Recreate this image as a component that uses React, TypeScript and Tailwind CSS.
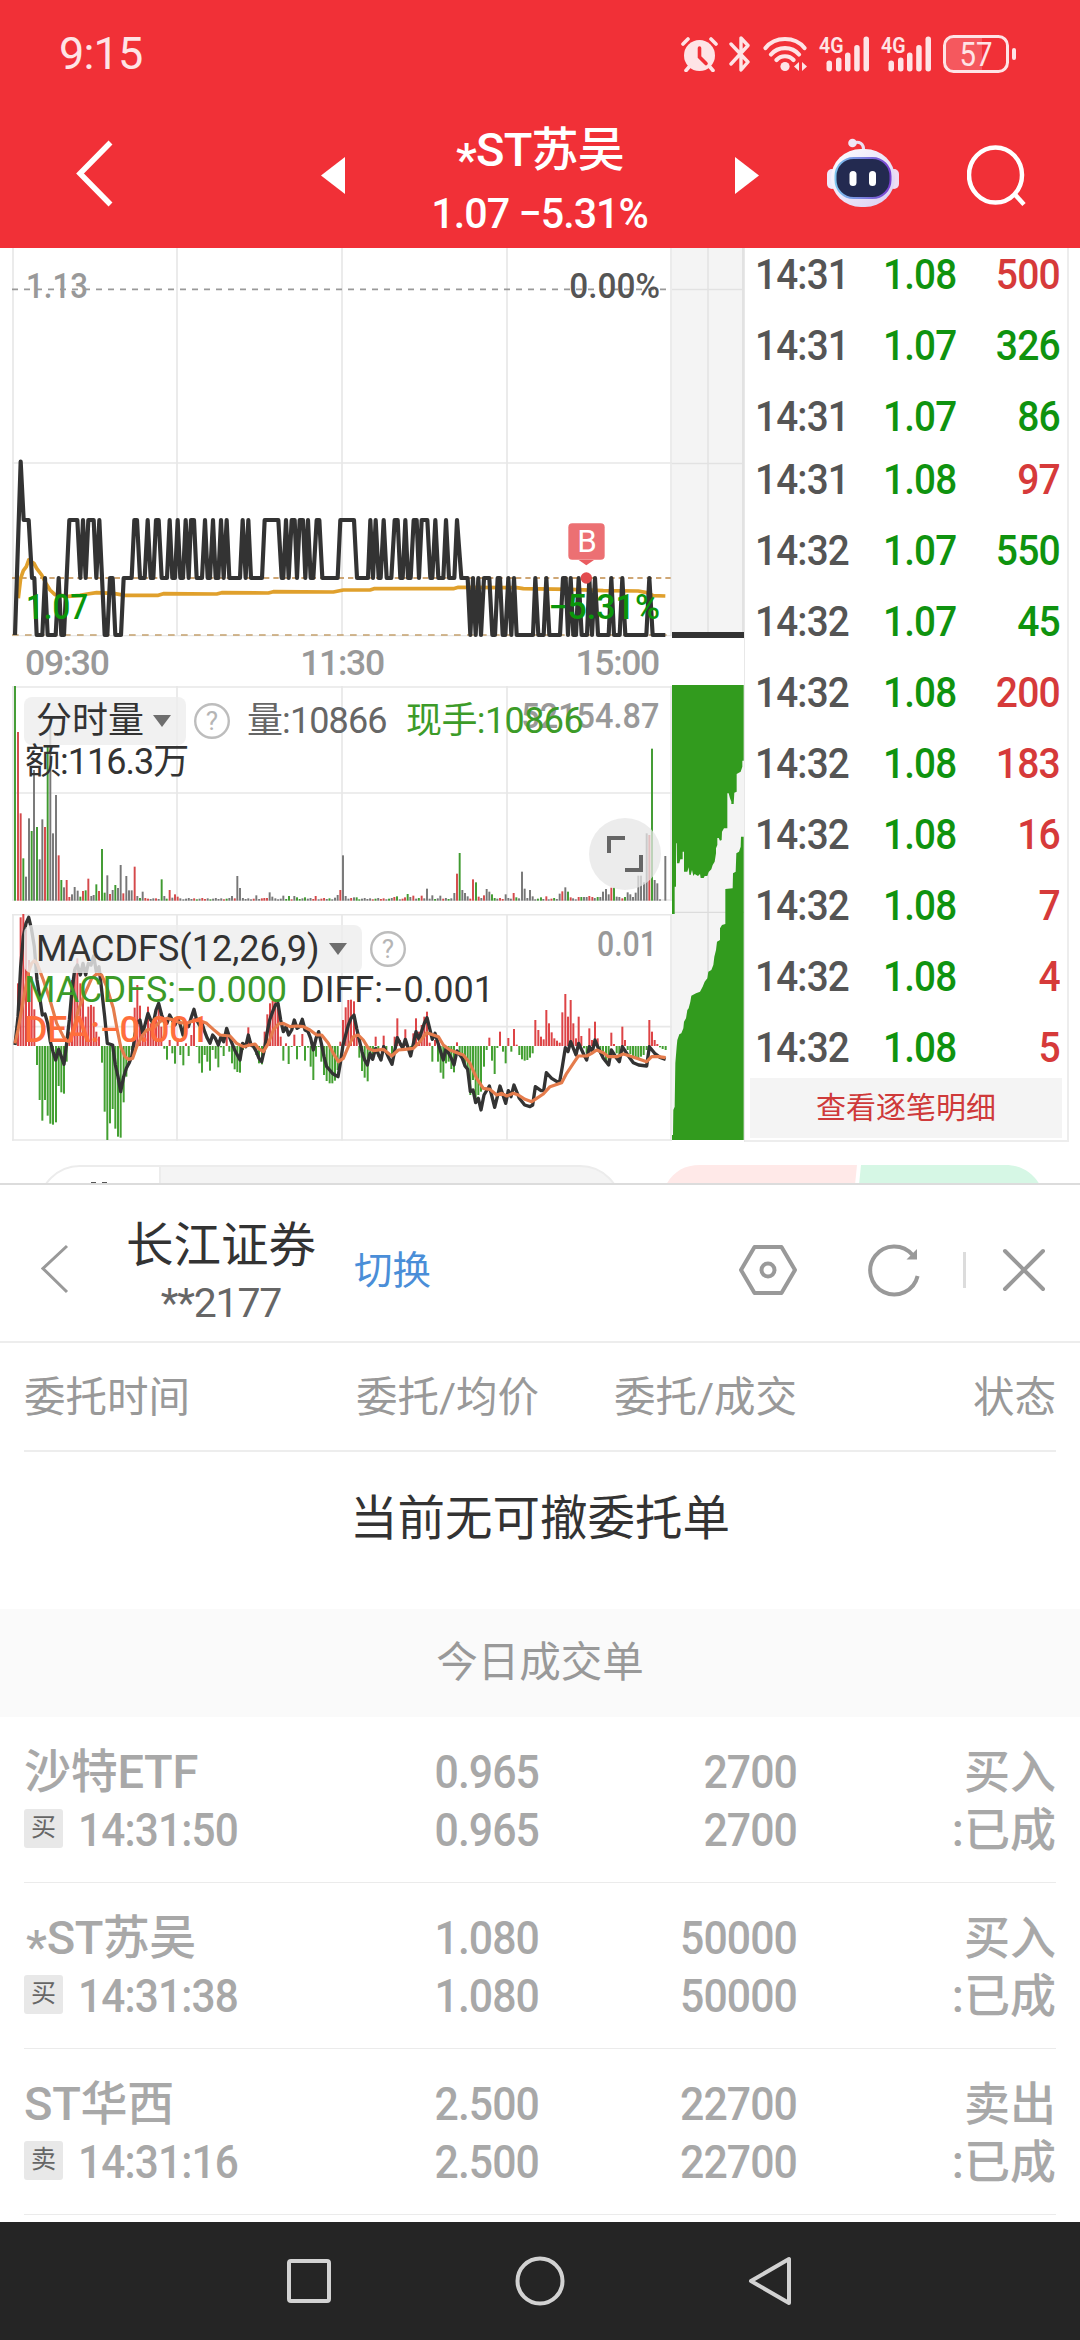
import React from 'react';

type Pt = [number, number];

// chart coordinates are kept at 3 units per css pixel
const TOP = 840;
const MID = 1014;
const LOW = 1185;

const PRICE_RUNS: [number, number, number][] = [
  [45, 45, LOW], [62, 62, 665], [71, 86, TOP], [96, 103, MID], [110, 127, LOW], [135, 135, MID], [143, 167, LOW],
  [176, 176, MID], [184, 192, LOW], [208, 232, TOP], [241, 241, MID], [249, 249, TOP], [257, 257, MID], [265, 281, TOP],
  [289, 289, MID], [298, 298, TOP], [314, 322, LOW], [330, 338, MID], [346, 363, LOW], [371, 395, MID], [403, 411, TOP],
  [420, 434, MID], [443, 443, TOP], [452, 460, MID], [468, 476, TOP], [485, 501, MID], [509, 509, TOP], [517, 525, MID],
  [533, 533, TOP], [541, 549, MID], [557, 557, TOP], [566, 566, MID], [573, 582, TOP], [590, 606, MID], [615, 615, TOP],
  [623, 630, MID], [639, 639, TOP], [647, 655, MID], [663, 663, TOP], [671, 671, MID], [680, 680, TOP], [688, 720, MID],
  [728, 728, TOP], [737, 737, MID], [745, 745, TOP], [753, 786, MID], [794, 835, TOP], [845, 850, MID], [858, 858, TOP],
  [866, 866, MID], [875, 884, TOP], [891, 891, MID], [899, 909, TOP], [916, 916, MID], [924, 924, TOP], [932, 940, MID],
  [950, 958, TOP], [967, 1013, MID], [1021, 1062, TOP], [1071, 1104, MID], [1111, 1111, TOP], [1119, 1119, MID],
  [1127, 1127, TOP], [1136, 1142, MID], [1151, 1151, TOP], [1160, 1174, MID], [1184, 1193, TOP], [1201, 1208, MID],
  [1216, 1216, TOP], [1224, 1232, MID], [1241, 1250, TOP], [1257, 1257, MID], [1265, 1282, TOP], [1291, 1297, MID],
  [1306, 1306, TOP], [1315, 1330, MID], [1338, 1338, TOP], [1347, 1363, MID], [1371, 1371, TOP], [1384, 1403, MID],
  [1411, 1411, LOW], [1419, 1419, MID], [1427, 1427, LOW], [1435, 1435, MID], [1443, 1443, LOW], [1452, 1468, MID],
  [1477, 1485, LOW], [1493, 1500, MID], [1508, 1516, LOW], [1525, 1525, MID], [1534, 1534, LOW], [1542, 1542, MID],
  [1550, 1599, LOW], [1606, 1606, MID], [1615, 1631, LOW], [1639, 1639, MID], [1648, 1680, LOW], [1689, 1697, MID],
  [1704, 1704, LOW], [1712, 1712, MID], [1720, 1728, LOW], [1736, 1736, MID], [1745, 1761, LOW], [1768, 1768, MID],
  [1776, 1776, LOW], [1785, 1785, MID], [1794, 1826, LOW], [1834, 1834, MID], [1842, 1859, LOW], [1867, 1867, MID],
  [1876, 1939, LOW], [1948, 1948, MID], [1958, 1996, LOW],
];

const AVG_LINE =
  '55,1075 62,1015 70,992 79,980 86,960 93,965 102,970 110,985 125,1005 138,1030 150,1050 165,1064 205,1069 240,1066 262,1062 290,1058 340,1060 375,1066 475,1066 490,1061 650,1062 665,1058 805,1059 820,1055 1000,1056 1030,1050 1110,1050 1122,1046 1360,1046 1375,1042 1550,1043 1570,1046 1710,1048 1810,1052 1915,1053 1940,1058 1960,1067 1996,1068';

const VOLUME = `45,48,g 54,186,r 62,430,r 70,565,g 78,620,k 87,445,k 95,483,g 102,300,k 111,471,g 119,568,k 127,448,k 135,471,r
143,225,g 151,150,k 159,490,k 168,375,k 176,556,r 184,630,g 192,652,k 200,630,r 208,681,r 216,673,k 224,651,k 233,662,k
241,680,g 249,663,r 257,661,g 265,626,r 274,678,k 281,675,k 289,643,g 297,663,r 306,537,g 314,668,g 322,616,k 330,672,r
338,660,k 346,645,g 354,654,k 362,585,k 370,670,r 379,618,k 387,661,k 395,661,k 404,590,r 412,678,k 420,684,g 428,665,k
436,684,r 444,686,r 452,687,k 460,685,k 468,685,r 476,687,k 485,628,g 493,678,k 500,686,g 509,660,r 517,683,k 525,673,r
533,680,r 541,685,k 696,678,k 712,618,k 720,654,k 769,676,k 793,684,r 801,684,r 809,667,k 817,680,k 850,677,k 867,678,g
883,678,k 891,682,g 915,682,g 947,678,r 1005,683,k 1013,675,k 1021,660,r 1029,556,k 1037,678,k 1062,682,k 1070,682,g
1183,681,r 1191,679,g 1215,682,r 1223,672,g 1231,681,k 1240,677,r 1265,677,r 1281,656,k 1297,676,k 1321,677,k 1363,669,k
1371,611,r 1379,549,g 1387,660,k 1395,669,k 1403,679,k 1419,628,r 1428,637,g 1436,680,r 1444,684,k 1452,676,r 1460,657,k
1468,665,k 1476,673,g 1484,684,g 1517,673,k 1525,684,k 1541,669,r 1549,682,g 1557,685,k 1566,605,k 1574,656,k 1582,684,k
1590,660,k 1598,679,k 1623,682,g 1639,679,r 1679,671,k 1687,664,r 1696,652,k 1704,665,g 1712,682,r 1736,681,r 1744,681,g
1752,681,k 1760,681,k 1768,678,r 1777,681,r 1793,681,g 1801,681,k 1809,665,k 1818,657,k 1826,673,k 1834,653,r 1842,653,g
1850,680,k 1858,681,k 1867,685,r 1875,681,g 1883,667,k 1891,673,k 1899,681,k 1907,668,k 1915,617,k 1923,617,k 1932,637,k
1940,490,k 1948,495,r 1956,236,g 1964,630,k 1972,640,k 1980,688,k 1996,558,k`
  .split(/\s+/)
  .map((s) => {
    const [x, y, c] = s.split(',');
    return { x: +x, y: +y, c };
  });

// thin trading minutes between the listed bars
const QUIET: { x: number; y: number; c: string }[] = [];
for (let i = 0; i < 176; i++) {
  const x = 550 + i * 8.12;
  if (x < 1975 && !VOLUME.some((v) => Math.abs(v.x - x) < 5)) {
    QUIET.push({ x, y: 688 - ((i * 7) % 5), c: 'kkrgkkgrkrk'[(i * 5) % 11] });
  }
}

const ZERO = 1128;
const MACD = `54,940 62,742 70,732 78,780 87,870 95,920 103,1018 111,1185 119,1290 127,1352 135,1290 143,1337 151,1361 159,1364
168,1357 176,1248 184,1267 192,1271 200,1175 208,1085 216,930 224,890 232,865 241,940 249,970 257,1040 265,1010 273,1005
281,1010 289,1085 297,1100 306,1178 314,1325 322,1410 330,1360 338,1317 346,1376 354,1400 362,1403 371,1297 379,1220
387,1180 395,1140 404,1013 412,945 420,1007 428,1070 436,1080 444,1010 452,1060 460,1090 468,1040 476,1010 484,1070
493,1136 501,1169 509,1110 517,1150 525,1181 533,1105 541,1155 550,1186 558,1120 566,1158 574,1095 582,1045 590,1131 598,1180
606,1208 614,1155 622,1175 630,1202 638,1140 647,1166 655,1192 663,1132 671,1158 680,1100 688,1145 696,1180 704,1198
712,1206 720,1208 729,1140 737,1120 745,1072 753,1115 761,1135 769,1155 777,1180 786,1183 794,1085 802,1033 810,1000
818,992 826,995 834,998 842,1100 850,1172 858,1120 866,1182 875,1131 883,1094 891,1168 899,1131 907,1092 915,1172 924,1133 932,1190
940,1230 948,1160 956,1131 964,1175 972,1215 980,1233 989,1240 997,1240 1005,1232 1013,1200 1021,1115 1029,1050 1037,1012
1045,990 1053,989 1062,994 1070,1090 1078,1163 1086,1203 1094,1223 1103,1234 1111,1160 1119,1165 1127,1100 1135,1160
1151,1097 1159,1140 1176,1160 1184,1100 1192,1045 1200,1110 1208,1122 1216,1078 1224,1135 1232,1150
1240,1090 1248,1045 1257,1085 1265,1065 1273,1040 1281,1025 1289,1118 1297,1175 1305,1110 1314,1175 1322,1208 1330,1226
1338,1180 1346,1175 1354,1197 1362,1207 1371,1117 1379,1150 1387,1170 1395,1190 1403,1205 1411,1275 1419,1230 1427,1295
1435,1275 1443,1265 1452,1190 1460,1140 1468,1103 1476,1172 1484,1212 1492,1134 1500,1085 1509,1145 1517,1180 1525,1104
1534,1145 1542,1077 1550,1124 1558,1155 1566,1168 1574,1172 1582,1170 1590,1163 1598,1150 1606,1050 1615,1080 1623,1100
1631,1108 1639,1020 1647,1060 1655,1087 1663,1105 1671,1112 1679,1118 1687,1027 1696,972 1704,1040 1712,990 1720,1060
1728,1105 1736,1040 1744,1098 1752,1135 1760,1150 1768,1075 1776,1110 1785,1055 1793,1105 1801,1150 1809,1160 1818,1175
1826,1180 1834,1088 1842,1122 1850,1150 1858,1165 1867,1070 1875,1110 1883,1140 1891,1152 1899,1160 1907,1165 1915,1165
1923,1160 1931,1155 1940,1140 1948,1050 1956,1085 1964,1110 1972,1122 1980,1132 1988,1137 1997,1140`
  .split(/\s+/)
  .map((s) => s.split(',').map(Number) as Pt);

const DIFF_LINE =
  '45,1125 54,1040 62,890 70,800 78,760 86,742 94,775 103,830 111,930 119,980 127,1035 135,1032 143,1060 151,1115 159,1145 167,1170 176,1138 184,1160 192,1183 200,1120 208,1050 216,960 224,900 232,885 241,915 249,880 257,915 265,880 273,885 281,858 289,905 297,890 305,960 314,1040 322,1120 338,1125 346,1185 354,1220 362,1265 371,1220 379,1195 387,1180 395,1160 403,1110 411,1060 420,1050 428,1090 436,1060 444,1030 452,1050 460,1060 468,1020 476,1000 485,1035 493,1055 501,1060 509,1035 517,1050 525,1065 533,1045 541,1065 549,1095 557,1060 565,1070 573,1045 582,1018 590,1050 598,1065 606,1060 614,1085 622,1105 630,1120 638,1095 646,1105 655,1125 663,1100 671,1115 680,1075 688,1100 696,1120 704,1140 712,1155 720,1170 728,1120 737,1130 745,1095 753,1125 761,1130 769,1145 777,1165 785,1175 793,1140 801,1090 809,1050 818,1025 826,1005 834,1000 842,1050 850,1085 858,1070 866,1095 875,1080 883,1050 891,1075 899,1070 907,1048 915,1080 924,1085 932,1105 940,1140 948,1105 956,1085 964,1120 972,1160 980,1190 989,1200 997,1210 1005,1215 1014,1220 1021,1180 1029,1125 1037,1095 1045,1065 1053,1045 1062,1035 1070,1075 1078,1110 1086,1145 1094,1170 1102,1185 1110,1150 1118,1168 1127,1135 1143,1170 1151,1130 1167,1165 1176,1183 1192,1103 1208,1135 1216,1108 1232,1158 1248,1085 1257,1108 1273,1060 1281,1043 1297,1108 1305,1090 1322,1145 1330,1170 1338,1135 1354,1165 1362,1185 1371,1143 1387,1165 1395,1188 1403,1198 1411,1265 1419,1260 1427,1298 1435,1285 1443,1320 1452,1275 1468,1248 1484,1312 1500,1248 1517,1300 1525,1262 1533,1280 1542,1245 1558,1285 1574,1305 1590,1310 1598,1305 1606,1250 1623,1262 1631,1262 1639,1208 1655,1225 1671,1235 1679,1235 1687,1190 1696,1133 1704,1145 1712,1115 1728,1155 1736,1120 1752,1155 1760,1170 1768,1130 1777,1145 1785,1110 1793,1130 1810,1165 1826,1185 1834,1140 1850,1165 1858,1175 1867,1130 1883,1155 1900,1178 1916,1185 1940,1188 1948,1130 1964,1150 1980,1162 1997,1168';

const DEA_LINE =
  '45,1120 54,1080 70,990 86,905 95,880 103,872 111,880 130,930 150,990 170,1060 190,1100 200,1112 208,1115 220,1080 235,1020 255,970 275,925 290,912 305,915 320,950 340,1015 350,1070 362,1130 375,1160 385,1168 398,1165 410,1130 425,1100 440,1080 460,1075 480,1055 500,1045 520,1050 540,1058 560,1060 580,1052 600,1052 620,1060 640,1078 660,1095 690,1098 710,1120 730,1130 750,1125 765,1122 775,1135 790,1145 805,1120 820,1080 835,1062 850,1060 870,1070 890,1068 910,1070 930,1080 950,1095 965,1095 985,1120 1000,1150 1015,1175 1030,1165 1045,1130 1060,1100 1075,1095 1090,1110 1105,1135 1120,1142 1150,1138 1175,1158 1195,1140 1215,1138 1240,1135 1260,1115 1280,1088 1300,1095 1315,1100 1330,1125 1350,1140 1375,1150 1390,1155 1410,1180 1430,1225 1450,1255 1470,1258 1490,1275 1505,1270 1520,1278 1540,1270 1555,1275 1575,1288 1595,1295 1610,1285 1630,1272 1650,1250 1685,1238 1700,1210 1720,1180 1735,1158 1760,1158 1775,1150 1790,1140 1810,1148 1825,1160 1850,1160 1870,1152 1890,1158 1910,1165 1940,1175 1955,1160 1975,1160 1997,1163';

const ASK_AREA =
  '0,45 215,45 215,272 211,272 211,290 206,305 194,312 194,365 187,368 185,402 178,402 178,395 174,385 170,370 166,370 166,475 156,475 150,485 149,510 144,512 140,504 136,504 136,525 132,535 132,550 128,575 122,585 118,598 110,606 106,618 98,618 95,624 86,624 84,612 78,618 68,612 64,618 60,600 56,615 52,614 50,592 46,605 36,605 36,545 32,545 32,568 25,568 22,580 15,580 14,520 12,520 12,650 8,650 8,732 0,732';

const BID_AREA =
  '215,500 207,500 206,530 201,545 193,550 191,605 183,610 182,655 160,657 160,762 150,765 144,775 144,810 135,815 132,840 127,860 124,885 118,900 109,905 106,925 98,935 92,950 84,965 72,970 58,977 55,995 50,1015 46,1020 42,1045 36,1055 34,1075 28,1090 22,1093 16,1110 14,1130 10,1180 8,1310 4,1320 3,1395 0,1395 0,1410 215,1410';

const BAR_FILL: Record<string, string> = { r: '#d5494b', g: '#3f9a30', k: '#777777' };

const TRADES: [string, string, string, boolean][] = [
  ['14:31', '1.08', '500', true],
  ['14:31', '1.07', '326', false],
  ['14:31', '1.07', '86', false],
  ['14:31', '1.08', '97', true],
  ['14:32', '1.07', '550', false],
  ['14:32', '1.07', '45', false],
  ['14:32', '1.08', '200', true],
  ['14:32', '1.08', '183', true],
  ['14:32', '1.08', '16', true],
  ['14:32', '1.08', '7', true],
  ['14:32', '1.08', '4', true],
  ['14:32', '1.08', '5', true],
];

const ORDERS = [
  { name: '沙特ETF', side: '买', time: '14:31:50', price: '0.965', qty: '2700', action: '买入' },
  { name: '*ST苏吴', side: '买', time: '14:31:38', price: '1.080', qty: '50000', action: '买入' },
  { name: 'ST华西', side: '卖', time: '14:31:16', price: '2.500', qty: '22700', action: '卖出' },
];

function Signal() {
  return (
    <svg width="51" height="44" viewBox="0 -4 51 44" className="overflow-visible" fill="#fee4e6">
      <text x="0" y="17" fontSize="21.5" fontWeight="600" textLength="24.500" lengthAdjust="spacingAndGlyphs">4G</text>
      <rect x="7.5" y="24.5" width="5.5" height="11" rx="2.7" />
      <rect x="17" y="21.5" width="5.5" height="14" rx="2.7" />
      <rect x="26" y="16.5" width="5.5" height="19" rx="2.7" />
      <rect x="35.2" y="9" width="5.5" height="26.5" rx="2.7" />
      <rect x="44.5" y="0.5" width="5.5" height="35" rx="2.7" />
    </svg>
  );
}

function StatusBar() {
  return (
    <div className="flex h-[108px] items-center pl-[59px] pr-[63px] text-[#fee4e6]">
      <span className="text-[45px] leading-[50px] tracking-[-0.8px]">9:15</span>
      <div className="ml-auto flex items-center">
        <svg width="37" height="36" viewBox="0 0 37 36" fill="none" stroke="#fee4e6" strokeWidth="3.6" strokeLinecap="round">
          <circle cx="18.5" cy="19.5" r="15.5" fill="#fee4e6" stroke="none" />
          <path d="M2 8 7 3M35 8 30 3M8 31 5 34.5M29 31 32 34.5" />
          <path d="M18.5 12v9l6.5 6.5" stroke="#f13037" />
        </svg>
        <svg className="ml-[10px]" width="24" height="36" viewBox="0 0 24 36" fill="none" stroke="#fee4e6" strokeWidth="3.4" strokeLinecap="round" strokeLinejoin="round">
          <path d="M3 8 20 26 13 34V22M3 28 20 9.5 13 2v12" />
        </svg>
        <svg className="ml-[11px]" width="44" height="36" viewBox="0 0 44 36" fill="none" stroke="#fee4e6" strokeWidth="4.2" strokeLinecap="round">
          <path d="M2.5 12C12 0 32 0 41.5 12M8 18.5c7-8.5 21-8.5 28 0M13.5 24c4.5-5 12.5-5 17 0" />
          <circle cx="22" cy="30.5" r="4.6" fill="#fee4e6" stroke="none" />
          <path d="M36 26v9l-5-4.5zM39 26v9l5-4.5z" fill="#fee4e6" stroke="none" />
        </svg>
        <div className="ml-[12px]"><Signal /></div>
        <div className="ml-[11px]"><Signal /></div>
        <svg className="ml-[11px]" width="74" height="38" viewBox="0 0 74 38">
          <path d="M10 3h29v32h-29a7 7 0 0 1-7-7v-18a7 7 0 0 1 7-7z" fill="#f5585e" />
          <rect x="1.5" y="1.5" width="63" height="35" rx="9" fill="none" stroke="#fee4e6" strokeWidth="3" />
          <rect x="69" y="13" width="4" height="12" rx="2" fill="#fee4e6" />
          <text x="33" y="30.5" fontSize="33" textAnchor="middle" textLength="33" lengthAdjust="spacingAndGlyphs" fill="#fee4e6">57</text>
        </svg>
      </div>
    </div>
  );
}

function RobotIcon() {
  return (
    <svg width="74" height="70" viewBox="0 0 74 70">
      <defs>
        <linearGradient id="shell" x1="0" y1="0" x2="1" y2="1">
          <stop offset="0" stopColor="#ffffff" />
          <stop offset="1" stopColor="#d9cdf2" />
        </linearGradient>
        <linearGradient id="rim" x1="0" y1="0" x2="1" y2="0">
          <stop offset="0" stopColor="#7cc3ee" />
          <stop offset="1" stopColor="#7a3fd0" />
        </linearGradient>
      </defs>
      <path d="M27 5c6-2 11 0 10.5 8" fill="none" stroke="#eadff2" strokeWidth="3.2" />
      <circle cx="26.5" cy="5" r="4.3" fill="#efe6f6" />
      <rect x="1" y="31" width="10" height="20" rx="5" fill="#efe9fb" />
      <rect x="63" y="31" width="10" height="20" rx="5" fill="#efdcf3" />
      <rect x="5" y="11" width="64" height="58" rx="30" fill="url(#shell)" />
      <rect x="9.5" y="20" width="55" height="40" rx="18" fill="#232a50" stroke="url(#rim)" strokeWidth="2" />
      <rect x="23.5" y="33" width="7" height="15" rx="3.5" fill="#fff" />
      <rect x="43" y="33" width="7" height="15" rx="3.5" fill="#fff" />
    </svg>
  );
}

function TitleBar() {
  return (
    <div className="flex h-[140px] items-start text-white">
      <svg className="ml-[76px] mt-[32px]" width="38" height="68" viewBox="0 0 38 68" fill="none" stroke="#fff" strokeWidth="5.5">
        <path d="M34.5 2.5 4 33.5 34.5 64.5" />
      </svg>
      <svg className="ml-[207px] mt-[49px]" width="24" height="37" viewBox="0 0 24 37" fill="#fff"><path d="M24 0v37L0 18.5z" /></svg>
      <div className="flex w-[390px] flex-col items-center pt-[16px]">
        <div className="flex text-[47px] font-medium leading-[52px] tracking-[-0.8px]">
          <span className="pt-[10px]">*</span>
          <span>ST苏吴</span>
        </div>
        <div className="mt-[4px] scale-x-[.97] text-[42.5px] font-medium leading-[48px] tracking-[-1px]">1.07 −5.31%</div>
      </div>
      <svg className="mt-[49px]" width="24" height="37" viewBox="0 0 24 37" fill="#fff"><path d="M0 0v37L24 18.5z" /></svg>
      <div className="ml-[67px] mt-[30px]"><RobotIcon /></div>
      <svg className="ml-[67px] mt-[37px]" width="60" height="62" viewBox="0 0 60 62" fill="none" stroke="#fff" strokeWidth="4.5">
        <ellipse cx="28.5" cy="30" rx="26.5" ry="27.5" />
        <path d="M47 48.5 57 59.5" />
      </svg>
    </div>
  );
}

function PricePanel() {
  const line = PRICE_RUNS.map(([a, b, y]) => (a === b ? `${a},${y}` : `${a},${y} ${b},${y}`)).join(' ');
  return (
    <svg width="672" height="392" viewBox="0 24 2016 1176" className="block">
      <g stroke="#e8e8e8" strokeWidth="5" fill="none">
        <path d="M39 24V1188M531 24V1188M1026 24V1188M1521 24V1188M2013 24V1188" />
        <path d="M36 669H2016M36 1187H2016" strokeWidth="4" />
      </g>
      <path d="M36 148H2000" stroke="#999" strokeWidth="5" strokeDasharray="18 18" />
      <path d="M36 1014H2016" stroke="#c08a48" strokeWidth="5" strokeDasharray="16 12" />
      <path d="M36 1185H2000" stroke="#c4a06c" strokeWidth="5" strokeDasharray="20 19" />
      <polyline points={AVG_LINE} fill="none" stroke="#e0a02c" strokeWidth="11" strokeLinejoin="round" />
      <polyline points={line} fill="none" stroke="#333" strokeWidth="12.5" strokeLinejoin="round" />
      <circle cx="1759" cy="1014" r="17" fill="#e24b4f" />
      <path d="M1736 960h46l-23 16z" fill="#ea5c60" />
      <rect x="1705" y="850" width="109" height="109" rx="12" fill="#ec7073" />
      <g fontWeight="500" fontSize="106">
        <text x="1761" y="936" fontSize="94" fontWeight="400" textAnchor="middle" fill="#fff">B</text>
        <text x="78" y="174" textLength="186" lengthAdjust="spacingAndGlyphs" fill="#999">1.13</text>
        <text x="1708" y="174" textLength="272" lengthAdjust="spacingAndGlyphs" fill="#555">0.00%</text>
        <text x="78" y="1136" textLength="186" lengthAdjust="spacingAndGlyphs" fill="#0a960a">1.07</text>
        <text x="1645" y="1136" textLength="335" lengthAdjust="spacingAndGlyphs" fill="#0a960a">−5.31%</text>
      </g>
    </svg>
  );
}

function Help() {
  return (
    <svg width="36" height="36" viewBox="0 0 36 36">
      <circle cx="18" cy="18" r="16.8" fill="none" stroke="#bdbdbd" strokeWidth="2.4" />
      <text x="18" y="27" textAnchor="middle" fontSize="26" fill="#b5b5b5">?</text>
    </svg>
  );
}

function Caret() {
  return (
    <svg width="18" height="12" viewBox="0 0 18 12" fill="#6e6e6e"><path d="M0 0h18L9 12z" /></svg>
  );
}

function VolumePanel() {
  return (
    <div className="relative h-[228px]">
      <svg width="672" height="228" viewBox="0 48 2016 684" className="block">
        <g stroke="#e8e8e8" strokeWidth="5" fill="none">
          <path d="M39 48V692M531 48V692M1026 48V692M1521 48V692M2013 48V692" />
          <path d="M36 51H2016M36 369H2016M36 690H2016" />
        </g>
        {[...VOLUME, ...QUIET].map((b, i) => (
          <rect key={i} x={b.x - 2.9} y={b.y} width="5.8" height={692 - b.y} fill={BAR_FILL[b.c]} />
        ))}
        <text x="1564" y="174" fontSize="106" fontWeight="500" textLength="414" lengthAdjust="spacingAndGlyphs" fill="#999">52154.87</text>
      </svg>
      <div className="absolute left-[24px] top-[11px] flex h-[48px] items-center text-[36px] leading-[48px]">
        <div className="flex h-[48px] w-[162px] items-center rounded-lg bg-[#eeeeee]/80 pl-[12px] text-[#333]">
          <span>分时量</span>
          <span className="ml-[9px]"><Caret /></span>
        </div>
        <span className="ml-[8px]"><Help /></span>
        <span className="ml-[17px] w-[142px] whitespace-nowrap tracking-[-0.9px] text-[#666]">量:10866</span>
        <span className="ml-[17px] whitespace-nowrap tracking-[-0.6px] text-[#3c9b28]">现手:10866</span>
      </div>
      <div className="absolute left-[25px] top-[52px] text-[36px] leading-[48px] tracking-[-1px] text-[#333]">额:116.3万</div>
      <div className="absolute left-[589px] top-[132px] flex size-[72px] items-center justify-center rounded-full bg-[#e6e6e6]/75">
        <svg width="38" height="38" viewBox="0 0 38 38" fill="none" stroke="#666" strokeWidth="4">
          <path d="M3 18V3h16M35 20v15h-16" />
        </svg>
      </div>
    </div>
  );
}

function MacdPanel() {
  return (
    <div className="relative h-[228px]">
      <svg width="672" height="228" viewBox="0 732 2016 684" className="block">
        <g stroke="#e8e8e8" strokeWidth="5" fill="none">
          <path d="M39 732V1412M531 732V1412M1026 732V1412M1521 732V1412M2013 732V1412" />
          <path d="M36 734H2016M36 1070H2016M36 1410H2016" />
        </g>
        {MACD.map(([x, y], i) => (
          <rect
            key={i}
            x={x - 3}
            y={Math.min(y, ZERO)}
            width="6"
            height={Math.abs(y - ZERO)}
            fill={y < ZERO ? '#dd4446' : '#43a032'}
          />
        ))}
        <polyline points={DIFF_LINE} fill="none" stroke="#333" strokeWidth="10" strokeLinejoin="round" />
        <polyline points={DEA_LINE} fill="none" stroke="#e57c4c" strokeWidth="9.5" strokeLinejoin="round" />
        <text x="1791" y="857" fontSize="106" fontWeight="500" textLength="180" lengthAdjust="spacingAndGlyphs" fill="#999">0.01</text>
      </svg>
      <div className="absolute left-[24px] top-[11px] flex h-[48px] items-center">
        <div className="flex h-[48px] w-[338px] items-center rounded-lg bg-[#eeeeee]/80 pl-[12px] text-[#333]">
          <span className="w-[283px] whitespace-nowrap text-[36px] leading-[48px]">MACDFS(12,26,9)</span>
          <span className="ml-[10px]"><Caret /></span>
        </div>
        <span className="ml-[8px]"><Help /></span>
      </div>
      <div className="absolute left-[24px] top-[52px] flex whitespace-nowrap text-[36px] leading-[48px]">
        <span className="w-[277px] text-[#3c9b28]">MACDFS:−0.000</span>
        <span className="text-[#333]">DIFF:−0.001</span>
      </div>
      <div className="absolute left-[24px] top-[92px] whitespace-nowrap text-[36px] font-medium leading-[48px] tracking-[-0.4px] text-[#ff6e3c]">DEA:−0.001</div>
    </div>
  );
}

function DepthColumn() {
  return (
    <div className="w-[73px] border-r border-[#e8e8e8]">
      <div className="flex h-[384px] bg-[#f4f4f4]">
        <svg width="72" height="384" viewBox="0 0 72 384" stroke="#e2e2e2" strokeWidth="1.5">
          <path d="M36 0V384M0 41.5H72M0 215.5H72" />
          <path d="M71 0V384" strokeWidth="2" />
        </svg>
      </div>
      <div className="h-[6px] bg-[#333]" />
      <div className="h-[47px]" />
      <svg width="72" height="455" viewBox="0 45 216 1365" preserveAspectRatio="none" className="block bg-[#f4f4f4]">
        <path d="M108 48V1410M0 727H216" stroke="#dcdcdc" strokeWidth="4" />
        <polygon points={ASK_AREA} fill="#329b1e" />
        <polygon points={BID_AREA} fill="#329b1e" />
      </svg>
    </div>
  );
}

function TradeRow({ trade }: { trade: [string, string, string, boolean] }) {
  const [time, price, qty, up] = trade;
  return (
    <div className="flex h-[71px] items-center pl-[10px] pr-[7px] text-[42px] font-medium leading-[48px] tracking-[-0.9px]">
      <span className="w-[128px] origin-left scale-x-[.92] text-[#555]">{time}</span>
      <span className="origin-left scale-x-[.92] text-[#0f930f]">{price}</span>
      <span className={up ? 'ml-auto origin-right scale-x-[.93] text-[#d63a3a]' : 'ml-auto origin-right scale-x-[.93] text-[#0f930f]'}>{qty}</span>
    </div>
  );
}

function TradeList() {
  return (
    <div className="flex w-[324px] flex-col overflow-hidden border-b-2 border-r-2 border-[#ededed]">
      <div className="-mt-[9px]">
        {TRADES.slice(0, 3).map((t, i) => <TradeRow key={i} trade={t} />)}
      </div>
      <div className="-mt-[8px]">
        {TRADES.slice(3).map((t, i) => <TradeRow key={i} trade={t} />)}
      </div>
      <button className="-mt-[5px] ml-[5px] h-[60px] w-[312px] bg-[#f4f4f4] text-[30px] leading-[60px] text-[#cf3a3a]">查看逐笔明细</button>
    </div>
  );
}

function ShortcutStrip() {
  return (
    <div className="flex h-[41px] items-start overflow-hidden pt-[23px]">
      <div className="ml-[38px] flex h-[90px] w-[584px] shrink-0 overflow-hidden rounded-[42px] border-2 border-[#ececec] bg-[#f4f4f4]">
        <div className="flex h-full w-[121px] gap-[6px] border-r-2 border-[#ececec] bg-white pl-[51px] pt-[15px]">
          <i className="h-[5px] w-[5px] bg-[#555]" />
          <i className="h-[5px] w-[5px] bg-[#555]" />
        </div>
      </div>
      <svg className="ml-[44px] shrink-0" width="376" height="20" viewBox="0 0 376 20">
        <path d="M0 20C7 7 18 0 34 0H191l-2 20z" fill="#ffe9e8" />
        <path d="M195 0H339c16 0 27 7 35 20H193z" fill="#d6f7e5" />
      </svg>
    </div>
  );
}

function SheetHeader() {
  return (
    <div className="flex h-[158px] items-center border-b-2 border-[#ededed] pt-[14px]">
      <svg className="-mt-[3px] ml-[41px]" width="28" height="50" viewBox="0 0 28 50" fill="none" stroke="#999" strokeWidth="3">
        <path d="M26 2 2 24.5 26 48" />
      </svg>
      <div className="ml-[57px] flex flex-col items-center pt-[4px]">
        <span className="text-[47.5px] leading-[56px] text-[#333]">长江证券</span>
        <span className="mt-[6px] text-[41px] leading-[46px] tracking-[-1.2px] text-[#666]">**2177</span>
      </div>
      <span className="ml-[38px] pt-[2px] text-[38.5px] leading-[50px] text-[#4a8ed8]">切换</span>
      <div className="ml-auto flex items-center pr-[34px]">
        <svg width="58" height="52" viewBox="0 0 58 52" fill="none" stroke="#999" strokeWidth="4" strokeLinejoin="round">
          <path d="M15.5 3H42.5L56 26 42.5 49H15.5L2 26z" />
          <circle cx="29" cy="26" r="6.5" />
        </svg>
        <svg className="ml-[70px]" width="54" height="54" viewBox="0 0 54 54" fill="none" stroke="#999" strokeWidth="4">
          <path d="M45.6 12A24 24 0 1 0 50.6 33" />
          <path d="M50 6v10.5H39.5z" fill="#999" stroke="none" />
        </svg>
        <span className="ml-[42px] h-[36px] w-[3px] bg-[#dcdcdc]" />
        <svg className="ml-[36px]" width="44" height="44" viewBox="0 0 44 44" fill="none" stroke="#999" strokeWidth="4" strokeLinecap="round">
          <path d="M3 3 41 41M41 3 3 41" />
        </svg>
      </div>
    </div>
  );
}

function OrderRow({ order }: { order: (typeof ORDERS)[number] }) {
  const starred = order.name.startsWith('*');
  return (
    <div className="mx-[24px] grid h-[166px] shrink-0 grid-cols-[280px_235px_258px_1fr] border-b border-[#ebebeb] pt-[26px] text-[46px] font-medium leading-[58px] text-[#a8a8a8]">
      <div>
        <div className="flex h-[58px] text-[47px]">
          {starred && <span className="pl-[2px] pt-[9px]">*</span>}
          <span className={starred ? 'tracking-[-0.6px]' : 'tracking-[-0.3px]'}>{starred ? order.name.slice(1) : order.name}</span>
        </div>
        <div className="flex items-center">
          <span className="-mt-[4px] flex h-[39px] w-[39px] items-center justify-center rounded-[3px] bg-[#e8e8e8] text-[25px] font-normal text-[#666]">{order.side}</span>
          <span className="ml-[15px] origin-left scale-x-[.92] whitespace-nowrap tracking-[-0.9px]">{order.time}</span>
        </div>
      </div>
      <div className="origin-right scale-x-[.93] text-right tracking-[-1px]">
        <div>{order.price}</div>
        <div>{order.price}</div>
      </div>
      <div className="origin-right scale-x-[.93] text-right tracking-[-1px]">
        <div>{order.qty}</div>
        <div>{order.qty}</div>
      </div>
      <div className="text-right">
        <div>{order.action}</div>
        <div>:已成</div>
      </div>
    </div>
  );
}

function NavBar() {
  return (
    <div className="flex h-[118px] shrink-0 items-center bg-[#252525]">
      <svg className="ml-[286px]" width="46" height="46" viewBox="0 0 46 46" fill="none" stroke="#d2d2d2" strokeWidth="4">
        <rect x="3" y="3" width="40" height="40" rx="2" />
      </svg>
      <svg className="ml-[183px]" width="50" height="50" viewBox="0 0 50 50" fill="none" stroke="#d2d2d2" strokeWidth="4">
        <circle cx="25" cy="25" r="22.5" />
      </svg>
      <svg className="ml-[182px]" width="46" height="50" viewBox="0 0 46 50" fill="none" stroke="#d2d2d2" strokeWidth="4" strokeLinejoin="round">
        <path d="M42 3v44L4 25z" />
      </svg>
    </div>
  );
}

export default function App() {
  return (
    <div className="flex h-[2340px] w-[1080px] flex-col overflow-hidden bg-white font-['Roboto','Noto_Sans_CJK_SC',sans-serif]">
      <header className="h-[248px] shrink-0 bg-[#f13037]">
        <StatusBar />
        <TitleBar />
      </header>

      <section className="flex h-[894px] shrink-0">
        <div className="w-[672px]">
          <PricePanel />
          <div className="flex h-[46px] items-center justify-between pl-[25px] pr-[13px] text-[35.5px] font-medium leading-[42px] tracking-[-1.3px] text-[#999]">
            <span>09:30</span>
            <span>11:30</span>
            <span>15:00</span>
          </div>
          <VolumePanel />
          <MacdPanel />
        </div>
        <DepthColumn />
        <TradeList />
      </section>
      <ShortcutStrip />

      <section className="flex h-[1039px] shrink-0 flex-col overflow-hidden border-t-2 border-[#dcdcdc] bg-white">
        <SheetHeader />
        <div className="mx-[24px] grid h-[109px] shrink-0 grid-cols-[280px_235px_258px_1fr] items-center border-b-2 border-[#ededed] pt-[4px] text-[41.5px] text-[#999]">
          <span>委托时间</span>
          <span className="text-right">委托/均价</span>
          <span className="text-right">委托/成交</span>
          <span className="text-right">状态</span>
        </div>
        <div className="flex h-[157px] shrink-0 items-center justify-center pb-[21px] text-[47.5px] text-[#333]">当前无可撤委托单</div>
        <div className="flex h-[108px] shrink-0 items-center justify-center bg-[#fafafa] text-[41.5px] text-[#999]">今日成交单</div>
        {ORDERS.map((o) => <OrderRow key={o.time} order={o} />)}
      </section>
      <NavBar />
    </div>
  );
}
